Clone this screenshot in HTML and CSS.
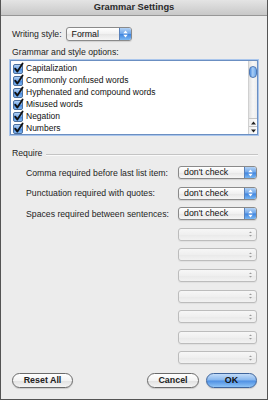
FILE: index.html
```html
<!DOCTYPE html>
<html lang="en">
<head>
    <meta charset="UTF-8">
    <meta name="viewport" content="width=device-width, initial-scale=1.0">
    <title>Grammar Settings</title>
    <link rel="stylesheet" href="styles.css">
</head>
<body>

<div class="window">
    <header class="titlebar">Grammar Settings</header>

    <div class="content">
        <div class="style-row">
            <span class="label">Writing style:</span>
            <div class="popup formal">
                <span class="value">Formal</span>
                <span class="arrows">
                    <svg width="5" height="8" viewBox="0 0 5 8"><path d="M0.3 3.2 L2.5 0.6 L4.7 3.2 Z M0.3 4.8 L2.5 7.4 L4.7 4.8 Z" fill="#fff"/></svg>
                </span>
            </div>
        </div>

        <div class="label caption">Grammar and style options:</div>

        <div class="listbox">
            <div class="items">
                <div class="item"><svg class="check" width="11" height="11" viewBox="0 0 11 11"><use href="#cb"/></svg>Capitalization</div>
                <div class="item"><svg class="check" width="11" height="11" viewBox="0 0 11 11"><use href="#cb"/></svg>Commonly confused words</div>
                <div class="item"><svg class="check" width="11" height="11" viewBox="0 0 11 11"><use href="#cb"/></svg>Hyphenated and compound words</div>
                <div class="item"><svg class="check" width="11" height="11" viewBox="0 0 11 11"><use href="#cb"/></svg>Misused words</div>
                <div class="item"><svg class="check" width="11" height="11" viewBox="0 0 11 11"><use href="#cb"/></svg>Negation</div>
                <div class="item"><svg class="check" width="11" height="11" viewBox="0 0 11 11"><use href="#cb"/></svg>Numbers</div>
            </div>
            <div class="scrollbar">
                <div class="track"><div class="thumb"></div></div>
                <div class="step"><svg width="5" height="4" viewBox="0 0 5 4"><path d="M0 3.5 L2.5 0.5 L5 3.5 Z" fill="#222"/></svg></div>
                <div class="step"><svg width="5" height="4" viewBox="0 0 5 4"><path d="M0 0.5 L2.5 3.5 L5 0.5 Z" fill="#222"/></svg></div>
            </div>
        </div>

        <div class="group">
            <span class="label">Require</span>
            <span class="rule"></span>
        </div>

        <div class="require">
            <span class="label">Comma required before last list item:</span>
            <div class="popup">
                <span class="value">don't check</span>
                <span class="arrows"><svg width="5" height="8" viewBox="0 0 5 8"><path d="M0.3 3.2 L2.5 0.6 L4.7 3.2 Z M0.3 4.8 L2.5 7.4 L4.7 4.8 Z" fill="#fff"/></svg></span>
            </div>

            <span class="label">Punctuation required with quotes:</span>
            <div class="popup">
                <span class="value">don't check</span>
                <span class="arrows"><svg width="5" height="8" viewBox="0 0 5 8"><path d="M0.3 3.2 L2.5 0.6 L4.7 3.2 Z M0.3 4.8 L2.5 7.4 L4.7 4.8 Z" fill="#fff"/></svg></span>
            </div>

            <span class="label">Spaces required between sentences:</span>
            <div class="popup">
                <span class="value">don't check</span>
                <span class="arrows"><svg width="5" height="8" viewBox="0 0 5 8"><path d="M0.3 3.2 L2.5 0.6 L4.7 3.2 Z M0.3 4.8 L2.5 7.4 L4.7 4.8 Z" fill="#fff"/></svg></span>
            </div>

            <div class="popup empty"><span class="value"></span><span class="arrows"><svg width="5" height="8" viewBox="0 0 5 8"><path d="M1 3 L2.5 1.4 L4 3 Z M1 5 L2.5 6.6 L4 5 Z" fill="#9a9a9a"/></svg></span></div>
            <div class="popup empty"><span class="value"></span><span class="arrows"><svg width="5" height="8" viewBox="0 0 5 8"><path d="M1 3 L2.5 1.4 L4 3 Z M1 5 L2.5 6.6 L4 5 Z" fill="#9a9a9a"/></svg></span></div>
            <div class="popup empty"><span class="value"></span><span class="arrows"><svg width="5" height="8" viewBox="0 0 5 8"><path d="M1 3 L2.5 1.4 L4 3 Z M1 5 L2.5 6.6 L4 5 Z" fill="#9a9a9a"/></svg></span></div>
            <div class="popup empty"><span class="value"></span><span class="arrows"><svg width="5" height="8" viewBox="0 0 5 8"><path d="M1 3 L2.5 1.4 L4 3 Z M1 5 L2.5 6.6 L4 5 Z" fill="#9a9a9a"/></svg></span></div>
            <div class="popup empty"><span class="value"></span><span class="arrows"><svg width="5" height="8" viewBox="0 0 5 8"><path d="M1 3 L2.5 1.4 L4 3 Z M1 5 L2.5 6.6 L4 5 Z" fill="#9a9a9a"/></svg></span></div>
            <div class="popup empty"><span class="value"></span><span class="arrows"><svg width="5" height="8" viewBox="0 0 5 8"><path d="M1 3 L2.5 1.4 L4 3 Z M1 5 L2.5 6.6 L4 5 Z" fill="#9a9a9a"/></svg></span></div>
            <div class="popup empty"><span class="value"></span><span class="arrows"><svg width="5" height="8" viewBox="0 0 5 8"><path d="M1 3 L2.5 1.4 L4 3 Z M1 5 L2.5 6.6 L4 5 Z" fill="#9a9a9a"/></svg></span></div>
        </div>

        <div class="buttons">
            <button class="btn reset">Reset All</button>
            <span class="spacer"></span>
            <button class="btn cancel">Cancel</button>
            <button class="btn ok">OK</button>
        </div>
    </div>
</div>

<svg width="0" height="0" style="position:absolute">
    <defs>
        <linearGradient id="cbfill" x1="0" y1="0" x2="0" y2="1">
            <stop offset="0" stop-color="#b9d6f6"/>
            <stop offset="0.5" stop-color="#6fa6ea"/>
            <stop offset="0.55" stop-color="#4a8be0"/>
            <stop offset="1" stop-color="#8cc0f4"/>
        </linearGradient>
        <g id="cb">
            <rect x="0.5" y="1.5" width="9" height="9" rx="1.5" fill="url(#cbfill)" stroke="#4c6f9e"/>
            <path d="M2.2 5.6 L4.4 8.6 L9.6 0.4" fill="none" stroke="#111" stroke-width="1.8" stroke-linecap="round" stroke-linejoin="round"/>
        </g>
    </defs>
</svg>

</body>
</html>
```

FILE: styles.css
```css
body {
    margin: 0;
    font-family: "Liberation Sans", Arial, sans-serif;
    background-color: #ececec;
    color: #1e1e1e;
}

.window {
    width: 268px;
    height: 400px;
    box-sizing: border-box;
    border: 1px solid #545454;
    border-top: none;
    background-color: #ececec;
}

.titlebar {
    height: 15px;
    line-height: 15px;
    border-bottom: 1px solid #979797;
    background: linear-gradient(#e4e4e4, #c8c8c8);
    text-align: center;
    font-size: 9.3px;
    font-weight: bold;
    color: #2a2a2a;
}

.content {
    padding: 0 9px;
}

.label {
    font-size: 8.7px;
    color: #1e1e1e;
    white-space: nowrap;
}

.style-row {
    display: flex;
    align-items: center;
    gap: 4px;
    height: 14px;
    margin-top: 11px;
    padding-left: 2px;
}

.caption {
    display: block;
    line-height: 12px;
    margin-top: 5px;
    padding-left: 2px;
}

/* pop-up menus */
.popup {
    display: flex;
    align-items: stretch;
    height: 13px;
    box-sizing: border-box;
    border: 1px solid #8a8a8a;
    border-radius: 3px;
    overflow: hidden;
    background: linear-gradient(#ffffff, #f1f1f1 50%, #e6e6e6 52%, #f6f6f6);
    box-shadow: 0 1px 1px rgba(0, 0, 0, 0.12);
}

.popup .value {
    flex: 1;
    font-size: 8.8px;
    line-height: 11px;
    padding-left: 5px;
    color: #111;
}

.popup .arrows {
    width: 11px;
    display: flex;
    align-items: center;
    justify-content: center;
    border-left: 1px solid #5a82ba;
    background: linear-gradient(#b3d2f5, #6ea6ea 48%, #3f84df 52%, #7bb8f3);
}

.popup.formal {
    width: 66px;
    height: 14px;
}

.popup.formal .value {
    line-height: 12px;
}

.popup.empty {
    grid-column: 2;
    border-color: #bcbcbc;
    background: linear-gradient(#f7f7f7, #efefef 50%, #e9e9e9 52%, #f2f2f2);
    box-shadow: 0 1px 1px rgba(0, 0, 0, 0.05);
}

.popup.empty .arrows {
    border-left: none;
    background: none;
}

/* list box */
.listbox {
    display: flex;
    height: 75px;
    box-sizing: border-box;
    margin-top: 2px;
    border: 1px solid #6b8fc2;
    box-shadow: 0 0 0 1px #aac6ec;
    background-color: #fff;
    overflow: hidden;
}

.items {
    flex: 1;
    padding: 1px 0 0 2px;
}

.item {
    display: flex;
    align-items: center;
    gap: 2px;
    height: 12px;
    font-size: 8.5px;
    color: #111;
    white-space: nowrap;
}

.check {
    flex: none;
    overflow: visible;
}

.scrollbar {
    width: 8px;
    display: flex;
    flex-direction: column;
    border-left: 1px solid #d0d0d0;
}

.track {
    flex: 1;
    background: linear-gradient(90deg, #e2e2e2, #f7f7f7 50%, #ececec);
}

.thumb {
    height: 12px;
    margin: 5px 0 0 0;
    border-radius: 4px;
    border: 1px solid #5079b4;
    box-sizing: border-box;
    background: linear-gradient(90deg, #4f8ee0, #a8cdf5 45%, #6aa5ea);
}

.step {
    height: 7px;
    display: flex;
    align-items: center;
    justify-content: center;
    border-top: 1px solid #c6c6c6;
    background: linear-gradient(90deg, #efefef, #fdfdfd);
}

/* require group */
.group {
    display: flex;
    align-items: center;
    gap: 4px;
    height: 12px;
    margin-top: 12px;
    padding-left: 2px;
}

.rule {
    flex: 1;
    margin-top: 3px;
    border-top: 1px solid #c4c4c4;
    border-bottom: 1px solid #fafafa;
}

.require {
    display: grid;
    grid-template-columns: 1fr 79px;
    grid-auto-rows: 13px;
    row-gap: 7.6px;
    align-items: center;
    margin-top: 7px;
    padding: 0 1px 0 16px;
}

/* buttons */
.buttons {
    display: flex;
    gap: 7px;
    margin-top: 8.6px;
    padding: 0 1px 0 2px;
}

.spacer {
    flex: 1;
}

.btn {
    height: 15px;
    box-sizing: border-box;
    padding: 0;
    border: 1px solid #6a6a6a;
    border-radius: 8px;
    background: linear-gradient(#ffffff, #f3f3f3 50%, #e1e1e1 53%, #f4f4f4);
    font-family: "Liberation Sans", Arial, sans-serif;
    font-size: 8.9px;
    font-weight: bold;
    color: #222;
    box-shadow: 0 1px 1px rgba(0, 0, 0, 0.15);
}

.reset {
    width: 61px;
}

.cancel {
    width: 52px;
}

.ok {
    width: 51px;
    border-color: #3f659c;
    background: linear-gradient(#c3dcf8, #86b6ee 48%, #4d8fe3 52%, #8fc4f6);
    color: #111;
}
```
